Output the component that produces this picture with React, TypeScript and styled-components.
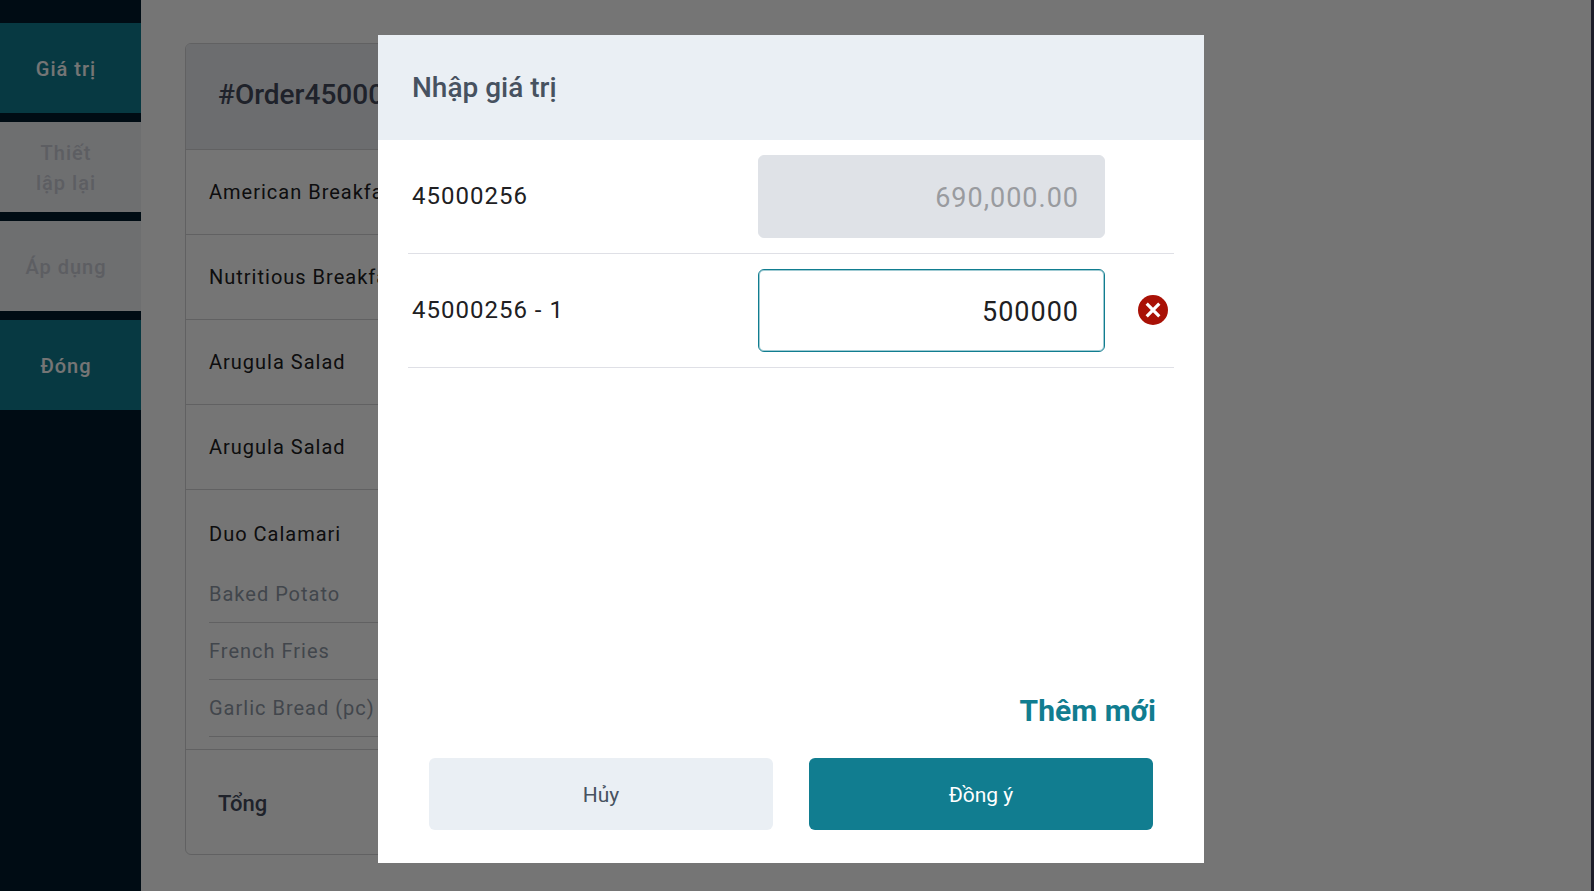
import React, { useState } from "react";
import styled, { createGlobalStyle, css } from "styled-components";

const GlobalStyle = createGlobalStyle`
  *, *::before, *::after { box-sizing: border-box; }
  body {
    margin: 0;
    background: #3d3d5b;
    font-family: Roboto, "Liberation Sans", sans-serif;
    letter-spacing: 1px;
    color: #202022;
  }
  button, input { font: inherit; letter-spacing: inherit; color: inherit; }
  h1, h2, ul, p { margin: 0; padding: 0; }
  ul { list-style: none; }
`;

const Page = styled.div`
  display: flex;
  min-height: 100vh;
  padding-right: 3px;
`;

const Sidebar = styled.nav`
  display: flex;
  flex-direction: column;
  gap: 9px;
  flex: 0 0 141px;
  padding-top: 23px;
  background: #001b2d;
`;

const SideButton = styled.button`
  height: 90px;
  padding: 2px 33px 0 24px;
  border: 0;
  background: #117d90;
  color: #fff;
  font-size: 20px;
  font-weight: 500;
  line-height: 30px;
  white-space: nowrap;

  &:disabled {
    background: #eff1f5;
    color: #cacdd6;
  }
`;

const Main = styled.main`
  flex: 1;
  padding: 43px 44px 36px;
  background: #fff;
`;

const OrderCard = styled.section`
  width: 60%;
  border: 1px solid #d3d4d6;
  border-radius: 6px;
  overflow: hidden;
`;

const OrderHeader = styled.header`
  padding: 33px 32px 36px;
  border-bottom: 1px solid #d3d4d6;
  background: #ebedf2;
`;

const OrderTitle = styled.h1`
  font-size: 28px;
  font-weight: 500;
  letter-spacing: 0;
  line-height: 36px;
  color: #444a5d;
`;

const OrderRow = styled.li`
  padding: 26px 23px;
  border-bottom: 1px solid #d3d4d6;
  font-size: 20px;
  line-height: 32px;
`;

const OrderGroup = styled(OrderRow)`
  padding-top: 28px;
  padding-bottom: 12px;
`;

const ExtraList = styled.ul`
  margin-top: 16px;
`;

const Extra = styled.li`
  padding: 12px 0;
  border-bottom: 1px solid #d3d4d6;
  color: #909aa7;
`;

const Total = styled.p`
  padding: 38px 32px 34px;
  font-size: 22px;
  font-weight: 500;
  letter-spacing: 0;
  line-height: 32px;
  color: #444a5d;
`;

const Overlay = styled.div`
  position: fixed;
  inset: 0;
  display: flex;
  justify-content: center;
  padding: 35px 12px 28px 0;
  background: rgba(0, 0, 0, 0.54);
`;

const Dialog = styled.form`
  display: flex;
  flex-direction: column;
  width: 826px;
  max-width: 100%;
  background: #fff;
`;

const DialogHeader = styled.header`
  padding: 35px 34px 34px;
  background: #eaeff4;
`;

const DialogTitle = styled.h2`
  font-size: 28px;
  font-weight: 500;
  letter-spacing: 0;
  line-height: 36px;
  color: #475260;
`;

const ValueList = styled.ul`
  flex: 1;
  padding: 0 30px;
`;

const ValueRow = styled.li`
  display: grid;
  grid-template-columns: 1fr 347px 69px;
  align-items: center;
  padding: 15px 0;
  border-bottom: 1px solid #dfe0e6;
`;

const ValueLabel = styled.label`
  padding: 0 0 2px 4px;
  font-size: 24px;
  line-height: 32px;
`;

const ValueInput = styled.input`
  width: 100%;
  height: 83px;
  padding: 2px 25px 0;
  border: 1px solid #117d90;
  border-radius: 6px;
  outline: 0;
  background: #fff;
  box-shadow: inset 0 0 0 1px rgba(17, 125, 144, 0.4);
  font-size: 27px;
  text-align: right;

  &:disabled {
    border-color: #dfe2e7;
    background: #dfe2e7;
    box-shadow: none;
    color: #999b9f;
  }
`;

const RemoveButton = styled.button`
  display: flex;
  justify-self: end;
  padding: 0 0 2px;
  margin-right: 6px;
  border: 0;
  background: none;
`;

const AddButton = styled.button`
  align-self: flex-end;
  margin-right: 48px;
  padding: 0;
  border: 0;
  background: none;
  font-size: 30px;
  font-weight: 700;
  letter-spacing: 0;
  line-height: 36px;
  color: #117d90;
`;

const Actions = styled.footer`
  display: flex;
  gap: 36px;
  padding: 29px 51px 33px;
`;

const ActionButton = styled.button<{ $primary?: boolean }>`
  flex: 1;
  height: 72px;
  padding: 2px 0 0;
  border: 0;
  border-radius: 6px;
  font-size: 21px;
  letter-spacing: 0;
  ${({ $primary }) =>
    $primary
      ? css`
          background: #117d90;
          color: #fff;
        `
      : css`
          background: #eaeff4;
          color: #475260;
        `}
`;

const RemoveIcon = () => (
  <svg width="30" height="30" viewBox="0 0 30 30" aria-hidden="true">
    <circle cx="15" cy="15" r="15" fill="#a91106" />
    <path d="M8.7 8.7 21.3 21.3M21.3 8.7 8.7 21.3" stroke="#fff" strokeWidth="3.2" />
  </svg>
);

const dishes = ["American Breakfast", "Nutritious Breakfast", "Arugula Salad", "Arugula Salad"];
const extras = ["Baked Potato", "French Fries", "Garlic Bread (pc)"];

export default function App() {
  const [value, setValue] = useState("500000");

  return (
    <>
      <GlobalStyle />
      <Page>
        <Sidebar>
          <SideButton>Giá trị</SideButton>
          <SideButton disabled>
            Thiết
            <br />
            lập lại
          </SideButton>
          <SideButton disabled>Áp dụng</SideButton>
          <SideButton>Đóng</SideButton>
        </Sidebar>
        <Main>
          <OrderCard>
            <OrderHeader>
              <OrderTitle>#Order45000</OrderTitle>
            </OrderHeader>
            <ul>
              {dishes.map((dish, i) => (
                <OrderRow key={i}>{dish}</OrderRow>
              ))}
              <OrderGroup>
                Duo Calamari
                <ExtraList>
                  {extras.map((extra) => (
                    <Extra key={extra}>{extra}</Extra>
                  ))}
                </ExtraList>
              </OrderGroup>
            </ul>
            <Total>Tổng</Total>
          </OrderCard>
        </Main>
      </Page>
      <Overlay>
        <Dialog role="dialog" aria-labelledby="dialog-title" onSubmit={(e) => e.preventDefault()}>
          <DialogHeader>
            <DialogTitle id="dialog-title">Nhập giá trị</DialogTitle>
          </DialogHeader>
          <ValueList>
            <ValueRow>
              <ValueLabel htmlFor="value-base">45000256</ValueLabel>
              <ValueInput id="value-base" value="690,000.00" disabled />
            </ValueRow>
            <ValueRow>
              <ValueLabel htmlFor="value-1">45000256 - 1</ValueLabel>
              <ValueInput id="value-1" value={value} onChange={(e) => setValue(e.target.value)} />
              <RemoveButton type="button" aria-label="Xóa">
                <RemoveIcon />
              </RemoveButton>
            </ValueRow>
          </ValueList>
          <AddButton type="button">Thêm mới</AddButton>
          <Actions>
            <ActionButton type="button">Hủy</ActionButton>
            <ActionButton type="submit" $primary>
              Đồng ý
            </ActionButton>
          </Actions>
        </Dialog>
      </Overlay>
    </>
  );
}
